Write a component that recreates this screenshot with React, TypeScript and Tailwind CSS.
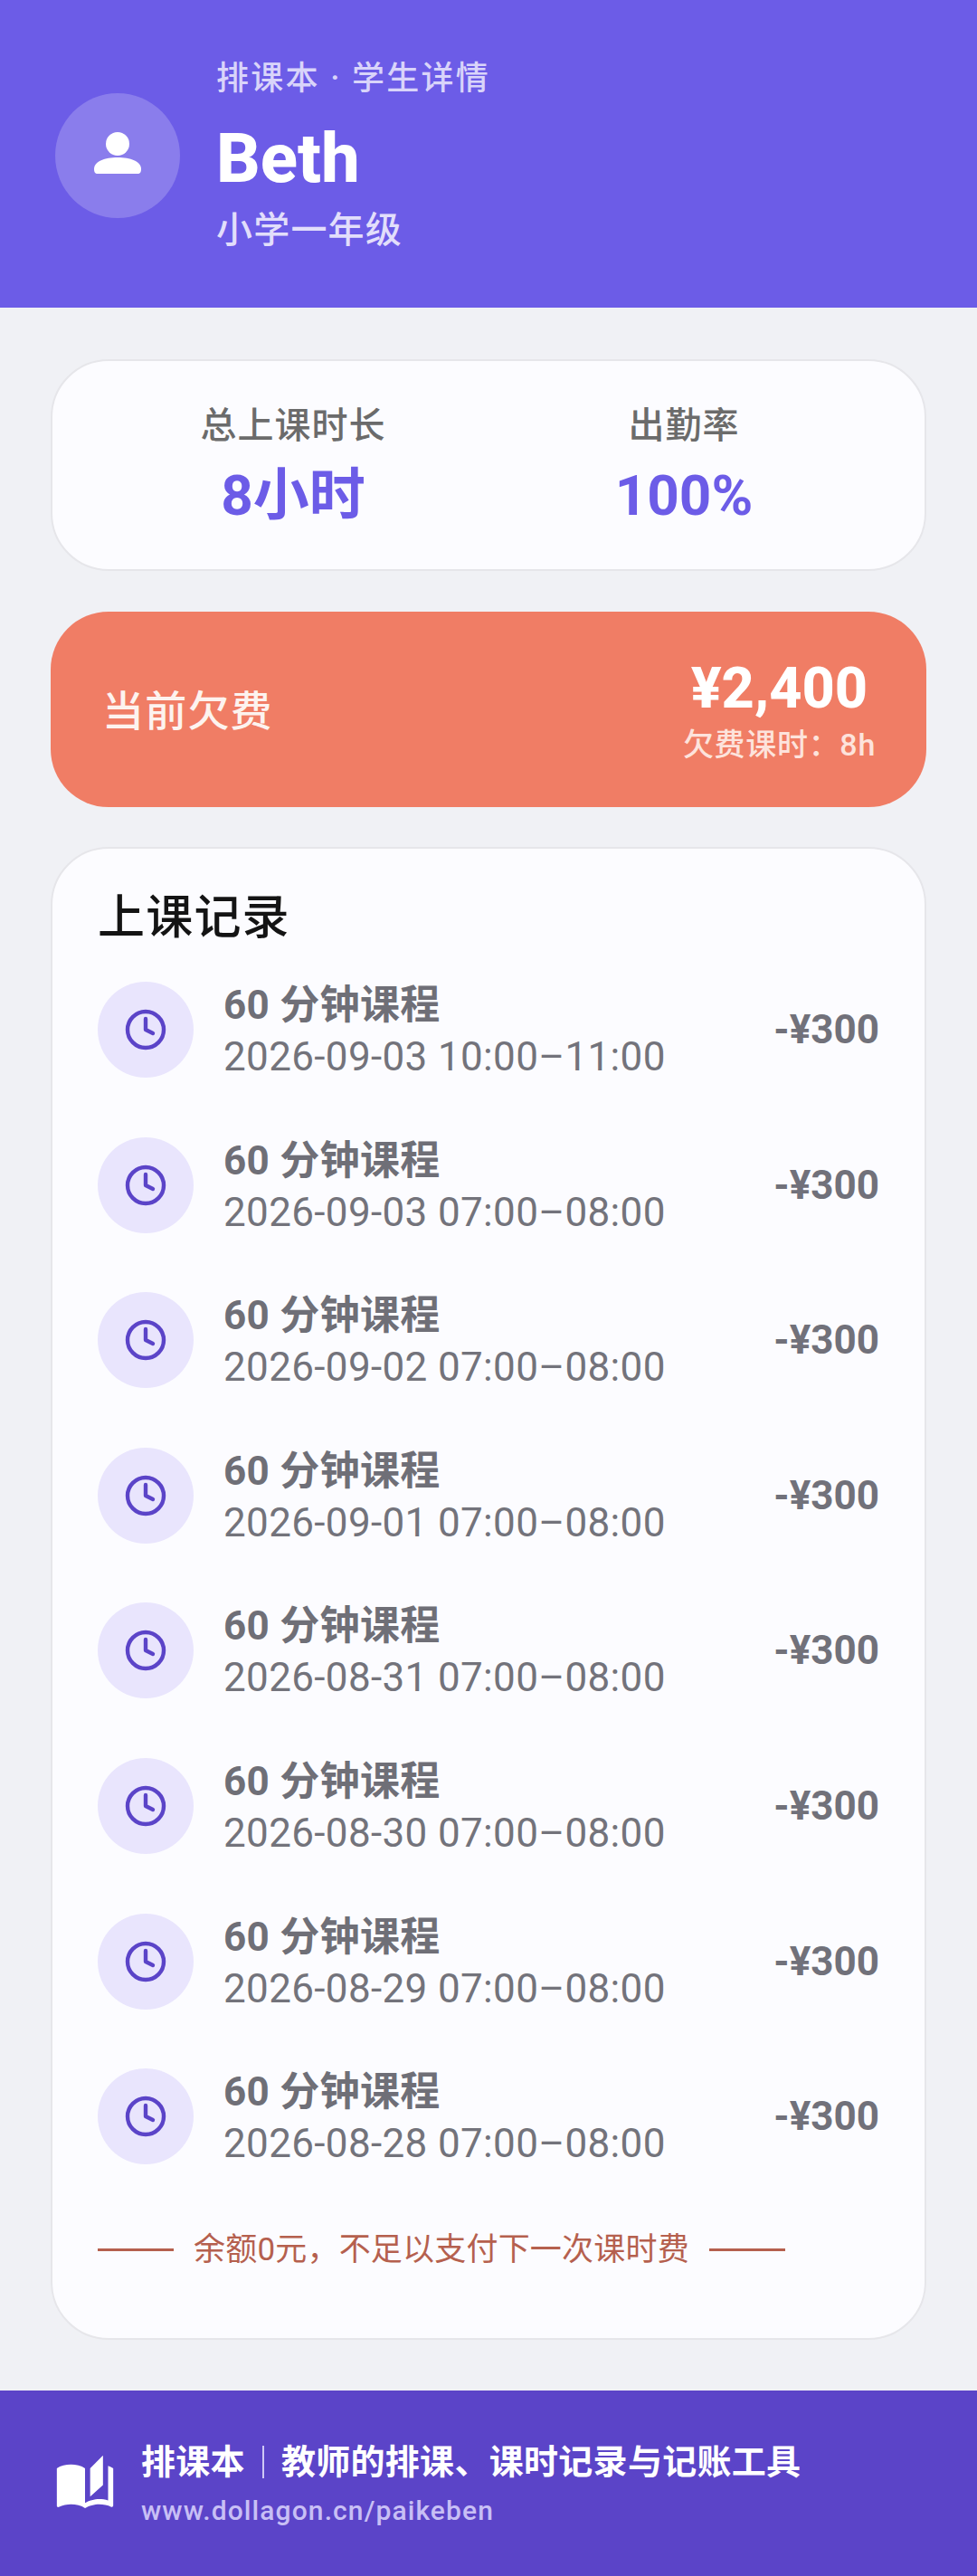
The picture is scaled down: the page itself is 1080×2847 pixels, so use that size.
import { Clock } from "lucide-react"
import { MdAutoStories } from "react-icons/md"

const records = [
  "2026-09-03 10:00–11:00",
  "2026-09-03 07:00–08:00",
  "2026-09-02 07:00–08:00",
  "2026-09-01 07:00–08:00",
  "2026-08-31 07:00–08:00",
  "2026-08-30 07:00–08:00",
  "2026-08-29 07:00–08:00",
  "2026-08-28 07:00–08:00",
]

export default function App() {
  return (
    <div className="w-[1080px] h-[2847px] flex flex-col bg-[#f0f1f5] font-['Roboto','Noto_Sans_CJK_SC',sans-serif]">
      {/* Header */}
      <header className="h-[340px] bg-[#6c5ce7] flex items-center gap-10 pl-[61px] pt-1">
        <div className="w-[138px] h-[138px] rounded-full bg-[#8a7dec] flex items-center justify-center">
          <svg width="54" height="54" viewBox="0 0 54 54" fill="white">
            <circle cx="27" cy="14" r="13" />
            <path d="M1 42c0-9 12-13 26-13s26 4 26 13c0 3-1 5-4 5H5c-3 0-4-2-4-5z" />
          </svg>
        </div>
        <div className="flex flex-col">
          <div className="text-[36px] leading-[48px] tracking-[2.3px] font-medium text-[#d9d4fa]">排课本 · 学生详情</div>
          <div className="mt-[18px] text-[76px] leading-[92px] font-extrabold text-white">Beth</div>
          <div className="mt-[8px] text-[40px] leading-[52px] tracking-[1.2px] font-medium text-[#e2defb]">小学一年级</div>
        </div>
      </header>

      <main className="flex-1 flex flex-col px-14 pt-[57px]">
        {/* Stats */}
        <section className="h-[234px] rounded-[64px] border-2 border-[#e6e6ea] bg-[#fcfcff] grid grid-cols-2 items-center px-[50px] pt-[3px]">
          <div className="flex flex-col items-center">
            <div className="text-[40px] leading-[52px] tracking-[1px] font-medium text-[#6b6b6b]">总上课时长</div>
            <div className="mt-[13px] text-[62px] leading-[76px] font-bold text-[#6c5ce7]">8小时</div>
          </div>
          <div className="flex flex-col items-center">
            <div className="text-[40px] leading-[52px] tracking-[1px] font-medium text-[#6b6b6b]">出勤率</div>
            <div className="mt-[13px] text-[62px] leading-[76px] font-bold text-[#6c5ce7]">100%</div>
          </div>
        </section>

        {/* Arrears */}
        <section className="mt-[45px] h-[216px] rounded-[64px] bg-[#f07d65] flex items-center justify-between pl-[57px] pr-14">
          <div className="text-[46px] tracking-[1.2px] font-medium text-[#fdf3ef] pt-1">当前欠费</div>
          <div className="flex flex-col items-center">
            <div className="text-[63px] leading-[72px] font-extrabold text-white">¥2,400</div>
            <div className="mt-[5px] text-[34px] leading-[42px] tracking-[0.7px] font-medium text-[#fde3dc]">欠费课时：8h</div>
          </div>
        </section>

        {/* Records */}
        <section className="mt-[44px] h-[1650px] rounded-[64px] border-2 border-[#e6e6ea] bg-[#fcfcff] flex flex-col px-[50px] pt-[45px]">
          <h2 className="text-[52px] leading-[64px] tracking-[1.2px] font-medium text-[#141414]">上课记录</h2>
          <div className="flex flex-col mt-[38px]">
            {records.map((date) => (
              <div key={date} className="h-[171.6px] flex items-start">
                <div className="w-[106px] h-[106px] rounded-full bg-[#e9e5fd] flex items-center justify-center shrink-0">
                  <Clock size={48} strokeWidth={2.2} className="text-[#5b44c8]" />
                </div>
                <div className="ml-[33px] flex-1 flex flex-col -mt-[2px]">
                  <div className="text-[44px] leading-[56px] font-bold tracking-[0.3px] text-[#6f6f77]">60 分钟课程</div>
                  <div className="mt-[1px] text-[44px] leading-[56px] tracking-[0.35px] text-[#73737b]">{date}</div>
                </div>
                <div className="text-[44px] leading-[106px] font-bold text-[#71717a]">-¥300</div>
              </div>
            ))}
          </div>
          <div className="flex items-center gap-[22px] mt-[5px]">
            <div className="w-[84px] h-[3px] bg-[#b5604e]" />
            <div className="text-[35px] leading-[48px] tracking-[0.2px] text-[#b5604e]">余额0元，不足以支付下一次课时费</div>
            <div className="w-[84px] h-[3px] bg-[#b5604e]" />
          </div>
        </section>
      </main>

      {/* Footer */}
      <footer className="h-[205px] bg-[#5b44c8] flex items-center gap-[28px] pl-[60px]">
        <MdAutoStories size={68} className="text-white shrink-0" />
        <div className="flex flex-col gap-[10px]">
          <div className="flex items-center text-[38px] leading-[50px] font-bold tracking-[0.3px] text-white">
            <span>排课本</span>
            <span className="w-[2px] h-[36px] bg-[#cfc8f5] mx-[19px]" />
            <span>教师的排课、课时记录与记账工具</span>
          </div>
          <div className="text-[30px] leading-[38px] font-medium tracking-[1.1px] text-[#c8bff5]">www.dollagon.cn/paikeben</div>
        </div>
      </footer>
    </div>
  )
}
